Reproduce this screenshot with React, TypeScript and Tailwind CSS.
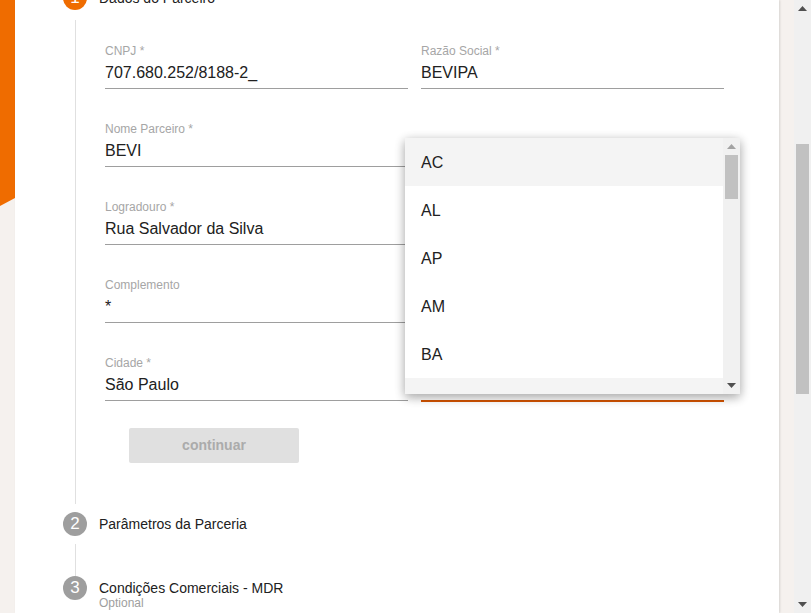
import React from "react";

const font = { fontFamily: "'Liberation Sans', Arial, sans-serif" };

function Field({ label, value, active }: { label: string; value: string; active?: boolean }) {
  return (
    <div className="flex flex-col">
      <div className="h-[17px] pt-px text-[12px] leading-4 text-[#a6a6a6]">{label}</div>
      <div className="mt-[2px] h-6 text-[16px] leading-6 text-[#212121]">{value}</div>
      <div className={active ? "mt-[3px] h-[2px] bg-[#d35400]" : "mt-[3px] h-px bg-[#9e9e9e]"} />
    </div>
  );
}

function UpArrow({ color = "#505050" }: { color?: string }) {
  return (
    <svg width="9" height="5" viewBox="0 0 9 5">
      <polygon points="0,5 9,5 4.5,0" fill={color} />
    </svg>
  );
}
function DownArrow({ color = "#505050" }: { color?: string }) {
  return (
    <svg width="9" height="5" viewBox="0 0 9 5">
      <polygon points="0,0 9,0 4.5,5" fill={color} />
    </svg>
  );
}

export default function App() {
  const fields: [string, string][] = [
    ["CNPJ *", "707.680.252/8188-2_"],
    ["Razão Social *", "BEVIPA"],
    ["Nome Parceiro *", "BEVI"],
    ["CEP *", ""],
    ["Logradouro *", "Rua Salvador da Silva"],
    ["Número *", ""],
    ["Complemento", "*"],
    ["Bairro *", ""],
    ["Cidade *", "São Paulo"],
    ["Estado *", ""],
  ];
  const states = ["AC", "AL", "AP", "AM", "BA"];
  return (
    <div className="flex h-[613px] w-[811px] overflow-hidden bg-[#f5f1ee]" style={font}>
      {/* left orange strip */}
      <div className="w-[15px] shrink-0">
        <div className="h-[206px] w-full bg-[#ef6c00] [clip-path:polygon(0_0,100%_0,100%_198px,0_206px)]" />
      </div>

      {/* card */}
      <div className="relative w-[764px] shrink-0 bg-white shadow-[1px_0_2px_rgba(0,0,0,0.12)]">
        <div className="mt-[-14px] pl-[48px]">
          {/* step 1 header */}
          <div className="flex h-6 items-center">
            <div className="flex h-6 w-6 items-center justify-center rounded-full bg-[#ef6c00] text-[17px] text-white">1</div>
            <div className="ml-3 text-[14px] text-[#212121]">Dados do Parceiro</div>
          </div>
          {/* step 1 content */}
          <div className="ml-[12px] mt-[10px] h-[484px] border-l border-[#e0e0e0] pl-[29px]">
            <div className="grid w-[619px] grid-cols-2 gap-x-[13px] gap-y-[31px] pt-[22px]">
              {fields.map(([l, v], i) => (
                <Field key={i} label={i === 3 || i === 5 || i === 7 || i === 9 ? "" : l} value={v} active={i === 9} />
              ))}
            </div>
            <button className="ml-[24px] mt-[26px] flex h-[35px] w-[170px] items-center justify-center rounded-[2px] bg-[#e0e0e0] text-[14px] font-bold text-[#ababab]">
              continuar
            </button>
          </div>
          {/* step 2 */}
          <div className="mt-[8px] flex h-6 items-center">
            <div className="flex h-6 w-6 items-center justify-center rounded-full bg-[#9e9e9e] text-[17px] text-white">2</div>
            <div className="ml-3 text-[14px] text-[#212121]">Parâmetros da Parceria</div>
          </div>
          <div className="ml-[12px] mt-[8px] h-[32px] border-l border-[#e0e0e0]" />
          {/* step 3 */}
          <div className="flex h-6 items-center">
            <div className="flex h-6 w-6 items-center justify-center rounded-full bg-[#9e9e9e] text-[17px] text-white">3</div>
            <div className="ml-3 flex flex-col">
              <div className="mt-[14px] text-[14px] leading-4 text-[#212121]">Condições Comerciais - MDR</div>
              <div className="text-[12px] leading-[14px] text-[#9e9e9e]">Optional</div>
            </div>
          </div>
        </div>

        {/* dropdown overlay */}
        <div className="absolute left-[390px] top-[138px] flex h-[256px] w-[335px] bg-white shadow-[0_3px_10px_rgba(0,0,0,0.23),0_3px_10px_rgba(0,0,0,0.16)]">
          <div className="flex w-[318px] flex-col">
            {states.map((s, i) => (
              <div
                key={s}
                className={
                  "flex h-[48px] shrink-0 items-center pl-[16px] pt-[2px] text-[16px] text-[#212121] " +
                  (i === 0 ? "bg-[#f4f4f4]" : "bg-white")
                }
              >
                {s}
              </div>
            ))}
            <div className="h-[16px] bg-[#f4f4f4]" />
          </div>
          <div className="relative flex w-[17px] flex-col items-center bg-[#f1f1f1]">
            <div className="flex h-[17px] items-center justify-center">
              <UpArrow color="#a3a3a3" />
            </div>
            <div className="h-[44px] w-[13px] bg-[#c1c1c1]" />
            <div className="flex-1" />
            <div className="flex h-[17px] items-center justify-center">
              <DownArrow />
            </div>
          </div>
        </div>
      </div>

      {/* right beige */}
      <div className="w-[15px] shrink-0" />

      {/* page scrollbar */}
      <div className="flex w-[17px] shrink-0 flex-col items-center bg-[#f0f0f0]">
        <div className="flex h-[17px] items-center justify-center">
          <UpArrow />
        </div>
        <div className="mt-[127px] h-[250px] w-[13px] bg-[#c1c1c1]" />
        <div className="flex-1" />
        <div className="flex h-[17px] items-center justify-center">
          <DownArrow />
        </div>
      </div>
    </div>
  );
}
